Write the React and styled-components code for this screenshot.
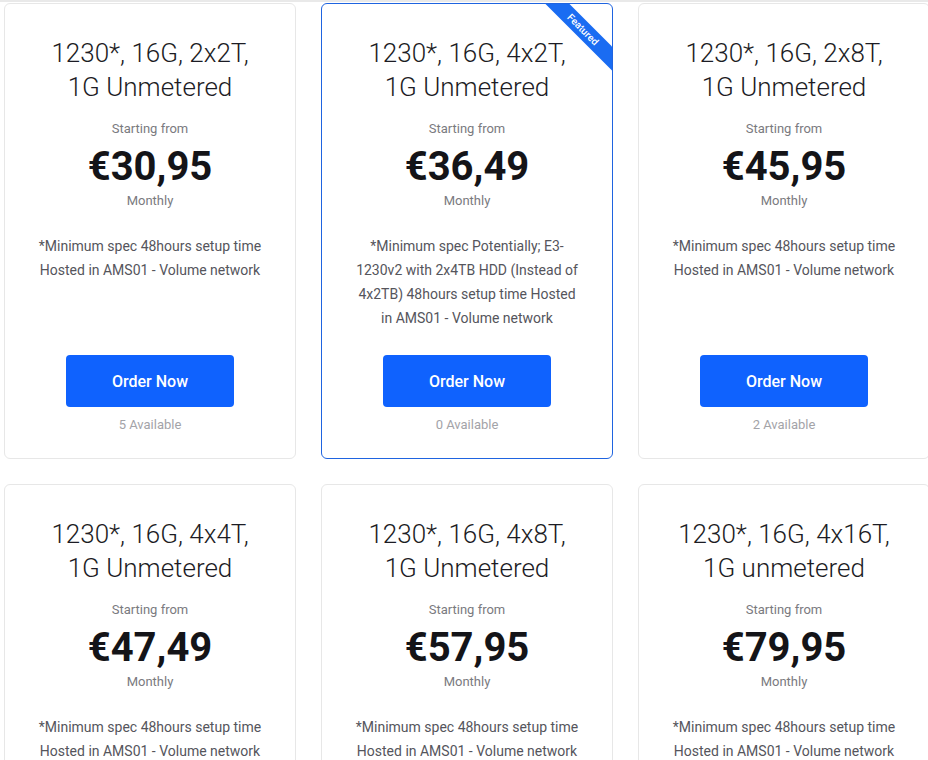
import React from 'react';
import styled, { createGlobalStyle } from 'styled-components';

const GlobalStyle = createGlobalStyle`
  * {
    box-sizing: border-box;
  }

  html, body {
    margin: 0;
    padding: 0;
    overflow-x: hidden;
    background: #ffffff;
    font-family: Roboto, "Liberation Sans", Arial, sans-serif;
  }
`;

const Page = styled.div`
  /* thin divider left by the section above */
  border-top: 2px solid #e9e9e9;
  padding: 1px 0 40px 4px;
  width: 940px;
`;

const Grid = styled.div`
  display: grid;
  grid-template-columns: repeat(3, 292px);
  column-gap: 25px;
  row-gap: 25px;
`;

const Card = styled.div`
  position: relative;
  display: flex;
  flex-direction: column;
  align-items: center;
  text-align: center;
  padding: 32px 31px 24px;
  border: 1px solid ${p => (p.featured ? '#1f64e0' : '#e7e7e7')};
  border-radius: 6px;
  background: #fff;
  overflow: hidden;
`;

const Title = styled.h3`
  margin: 0 -4px;
  font-size: 26px;
  font-weight: 300;
  line-height: 34px;
  color: #1c1c24;
`;

const Caption = styled.div`
  font-size: 13px;
  line-height: 20px;
  color: #7a7a80;
  margin-top: ${p => p.top || 0}px;
`;

const Price = styled.div`
  font-size: 40px;
  font-weight: 700;
  line-height: 44px;
  color: #141418;
  margin-top: 6px;
`;

const Description = styled.p`
  margin: 23px 0 0;
  font-size: 14px;
  line-height: 24px;
  color: #55555c;
`;

const OrderButton = styled.button`
  margin-top: auto;
  width: 168px;
  height: 52px;
  border: none;
  border-radius: 4px;
  background: #0f62fe;
  color: #fff;
  font-family: inherit;
  font-size: 16px;
  font-weight: 500;
  cursor: pointer;
`;

const Spacer = styled.div`
  height: 25px;
  flex-shrink: 0;
`;

const Available = styled.div`
  margin-top: 9px;
  font-size: 13px;
  line-height: 18px;
  color: #a3a3a8;
`;

const RibbonWrap = styled.div`
  position: absolute;
  top: 0;
  right: 0;
  width: 80px;
  height: 80px;
  overflow: hidden;
  pointer-events: none;
`;

const Ribbon = styled.span`
  position: absolute;
  left: -9px;
  top: 17px;
  width: 120px;
  height: 17px;
  line-height: 17px;
  background: #1a6cf2;
  color: #fff;
  font-size: 10px;
  font-weight: 500;
  text-align: center;
  transform: rotate(45deg);
`;

const plans = [
  {
    title: ['1230*, 16G, 2x2T,', '1G Unmetered'],
    price: '€30,95',
    desc: '*Minimum spec 48hours setup time Hosted in AMS01 - Volume network',
    available: 5,
  },
  {
    title: ['1230*, 16G, 4x2T,', '1G Unmetered'],
    price: '€36,49',
    desc: '*Minimum spec Potentially; E3-1230v2 with 2x4TB HDD (Instead of 4x2TB) 48hours setup time Hosted in AMS01 - Volume network',
    available: 0,
    featured: true,
  },
  {
    title: ['1230*, 16G, 2x8T,', '1G Unmetered'],
    price: '€45,95',
    desc: '*Minimum spec 48hours setup time Hosted in AMS01 - Volume network',
    available: 2,
  },
  {
    title: ['1230*, 16G, 4x4T,', '1G Unmetered'],
    price: '€47,49',
    desc: '*Minimum spec 48hours setup time Hosted in AMS01 - Volume network',
    available: 3,
  },
  {
    title: ['1230*, 16G, 4x8T,', '1G Unmetered'],
    price: '€57,95',
    desc: '*Minimum spec 48hours setup time Hosted in AMS01 - Volume network',
    available: 1,
  },
  {
    title: ['1230*, 16G, 4x16T,', '1G unmetered'],
    price: '€79,95',
    desc: '*Minimum spec 48hours setup time Hosted in AMS01 - Volume network',
    available: 4,
  },
];

const App = () => {
  return (
    <Page>
      <GlobalStyle />
      <Grid>
        {plans.map((plan, i) => (
          <Card key={i} featured={plan.featured}>
            {plan.featured && (
              <RibbonWrap>
                <Ribbon>Featured</Ribbon>
              </RibbonWrap>
            )}
            <Title>
              {plan.title[0]}
              <br />
              {plan.title[1]}
            </Title>
            <Caption top={15}>Starting from</Caption>
            <Price>{plan.price}</Price>
            <Caption top={2}>Monthly</Caption>
            <Description>{plan.desc}</Description>
            <Spacer />
            <OrderButton>Order Now</OrderButton>
            <Available>{plan.available} Available</Available>
          </Card>
        ))}
      </Grid>
    </Page>
  );
};

export default App;
